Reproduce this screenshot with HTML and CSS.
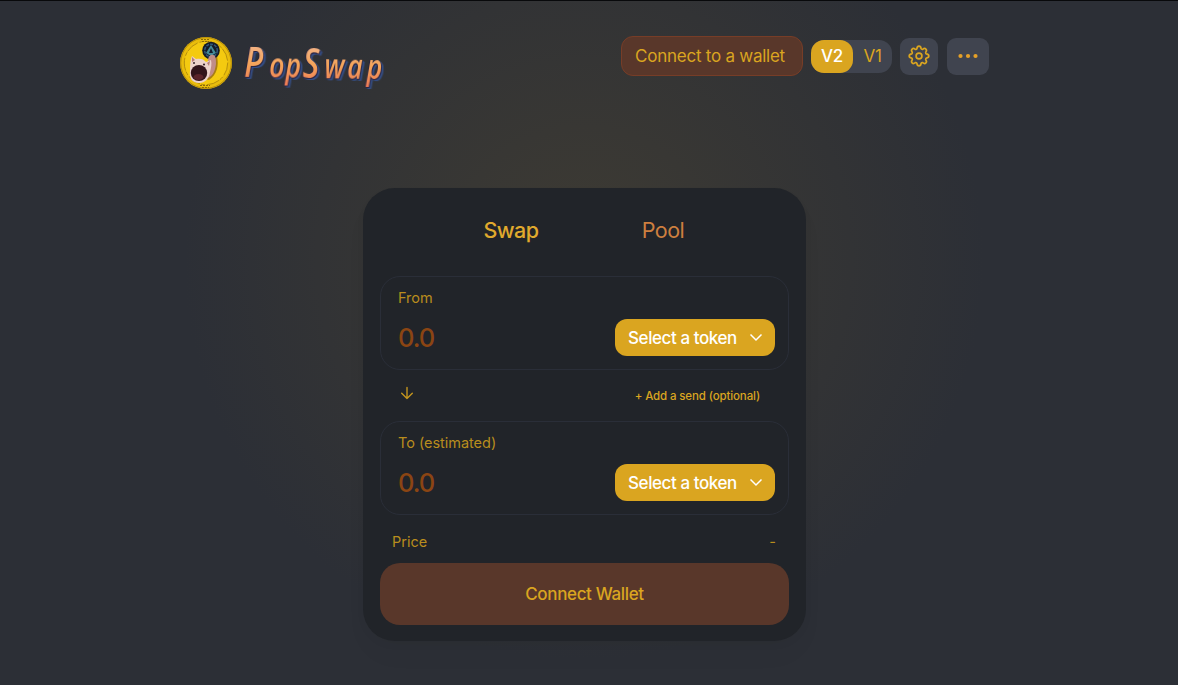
FILE: index.html
```html
<!DOCTYPE html>
<html lang="en">
<head>
<meta charset="utf-8">
<title>PopSwap</title>
<link rel="stylesheet" href="styles.css">
</head>
<body>
<header class="header">
  <a class="brand">
    <svg class="coin" width="54" height="54" viewBox="0 0 54 54">
      <circle cx="27" cy="27" r="26" fill="#e9bd0c"/>
      <circle cx="27" cy="27" r="25.3" fill="none" stroke="#b58c0b" stroke-width="1"/>
      <circle cx="27" cy="27" r="21.700" fill="#f4ca10" stroke="#b08a0c" stroke-width=".9" stroke-dasharray="13 2 4 1"/>
      <path d="M22 3.500h8M23 5.500h7M21 49.500h10M23 51.500h7" stroke="#8a6a0a" stroke-width="1" stroke-dasharray="2 1"/>
      <path d="M38 20c2 10 0 18-8 24l-8-2 14-25z" fill="#9a7014" opacity=".85"/>
      <circle cx="32" cy="14.500" r="8.800" fill="#141b27"/>
      <circle cx="32" cy="14.500" r="6.300" fill="none" stroke="#31577a" stroke-width="1.500" stroke-dasharray="3 1"/>
      <path d="M32 9l-5 8 5 3 5-3z" fill="#438997"/>
      <path d="M32 12l-2 5h4z" fill="#151b2c"/>
      <path d="M29 25c0-5 3-7 5-6 3 0 3 5 3 9-1 8-4 13-9 14z" fill="#c08d88"/>
      <path d="M12 23l1-3 4 3c4-1 8 0 10 3l5-2c1 4 0 8-1 12-1 7-5 11-11 11-7 0-10-5-9-12 0-4 0-8 1-12z" fill="#ecd2cb"/>
      <path d="M13 21l3 3-3 2zM28 27l3-2-1 5z" fill="#b77c76"/>
      <circle cx="15" cy="27" r="1" fill="#38242a"/><circle cx="25" cy="28.500" r="1.100" fill="#38242a"/>
      <ellipse cx="20" cy="37" rx="8.200" ry="8" fill="#32141b"/>
      <ellipse cx="19.500" cy="41" rx="5" ry="3" fill="#5a232a"/>
    </svg>
    <svg class="wordmark" width="164" height="70" viewBox="0 0 164 70">
      <defs>
        <linearGradient id="sunset" x1="0" y1="8" x2="0" y2="50" gradientUnits="userSpaceOnUse">
          <stop offset="0" stop-color="#f3b58b"/><stop offset=".5" stop-color="#f5a45a"/><stop offset="1" stop-color="#ee7a55"/>
        </linearGradient>
      </defs>
      <g transform="rotate(1 75 30)"><text class="letters" transform="scale(.78 1)" x="8 40 61 83 111 140 165" y="42 42 42 42 42 42 42">P<tspan class="small">op</tspan>S<tspan class="small">wap</tspan></text></g>
    </svg>
  </a>
  <nav class="controls">
    <button class="wallet">Connect to a wallet</button>
    <div class="versions"><span class="version active">V2</span><span class="version">V1</span></div>
    <button class="icon-button settings" aria-label="Settings">
      <svg width="24" height="24" viewBox="0 0 24 24" fill="none" stroke="#daa520" stroke-width="1.700" stroke-linejoin="round">
        <circle cx="12" cy="12" r="2.900"/>
        <path d="M9.900 4.700Q10.200 2.200 12 2.200T14.100 4.700Q14.400 5.400 15.700 5.300Q17.600 3.800 18.900 5.100T18.700 8.300Q18.600 9.700 19.300 9.900Q21.800 10.200 21.800 12T19.300 14.100Q18.600 14.400 18.700 15.700Q20.200 17.600 18.900 18.900T15.700 18.700Q14.400 18.600 14.100 19.300Q13.800 21.800 12 21.800T9.900 19.300Q9.600 18.600 8.300 18.700Q6.400 20.200 5.100 18.900T5.300 15.700Q5.400 14.400 4.700 14.100Q2.200 13.800 2.200 12T4.700 9.900Q5.400 9.600 5.300 8.300Q3.800 6.400 5.100 5.100T8.300 5.300Q9.700 5.400 9.900 4.700Z"/>
      </svg>
    </button>
    <button class="icon-button more" aria-label="More">
      <svg width="22" height="6" viewBox="0 0 22 6" fill="#e5a027"><circle cx="3.500" cy="3" r="2.100"/><circle cx="11" cy="3" r="2.100"/><circle cx="18.500" cy="3" r="2.100"/></svg>
    </button>
  </nav>
</header>
<main class="card">
  <div class="tabs"><span class="tab selected">Swap</span><span class="tab">Pool</span></div>
  <section class="panel">
    <div class="label">From</div>
    <div class="amount-row"><span class="amount">0.0</span>
      <button class="token">Select a token<svg width="14" height="9" viewBox="0 0 14 9" fill="none" stroke="#fff" stroke-width="1.500"><path d="M1.500 1.500L7 7l5.500-5.500"/></svg></button>
    </div>
  </section>
  <div class="between">
    <svg width="14" height="14" viewBox="0 0 14 14" fill="none" stroke="#c3951f" stroke-width="1.400" stroke-linecap="round" stroke-linejoin="round"><path d="M7 1.500v11M1.700 7.300L7 12.500l5.300-5.200"/></svg>
    <span class="add-send">+ Add a send (optional)</span>
  </div>
  <section class="panel">
    <div class="label">To (estimated)</div>
    <div class="amount-row"><span class="amount">0.0</span>
      <button class="token">Select a token<svg width="14" height="9" viewBox="0 0 14 9" fill="none" stroke="#fff" stroke-width="1.500"><path d="M1.500 1.500L7 7l5.500-5.500"/></svg></button>
    </div>
  </section>
  <div class="price"><span>Price</span><span>-</span></div>
  <button class="connect">Connect Wallet</button>
</main>
</body>
</html>
```

FILE: styles.css
```css
* { box-sizing: border-box; }
body {
  margin: 0;
  height: 685px;
  overflow: hidden;
  border-top: 1px solid #08090b;
  background: radial-gradient(circle 400px at 584px 260px, #3e3b33 0%, #2c2f36 100%) #2c2f36;
  font-family: Inter, "Liberation Sans", sans-serif;
  color: #daa520;
}
button { border: 0; padding: 0; font: inherit; color: inherit; }
svg { display: block; flex: none; }
.header {
  display: flex;
  justify-content: space-between;
  align-items: flex-start;
  height: 187px;
  padding: 35px 189px 0 179px;
}
.brand { display: flex; gap: 5px; }
.wordmark { overflow: visible; }
.letters {
  font: italic 600 41px "Open Sans", sans-serif;
  fill: url(#sunset);
  filter: drop-shadow(-1px 0 0 #2a2440) drop-shadow(1px 1px 0 #2a2440) drop-shadow(2.500px 1.500px 0 #34508c);
}
.small { font-size: 34px; }
.controls { display: flex; align-items: center; }
.wallet {
  width: 182px;
  height: 40px;
  border: 1px solid #773d27;
  border-radius: 12px;
  background: #59372a;
  font-size: 17px;
  letter-spacing: -.25px;
  padding-right: 4px;
}
.versions {
  display: flex;
  width: 81px;
  height: 33px;
  margin-left: 8px;
  border-radius: 13px;
  background: #40444f;
}
.version { flex: 1; line-height: 33px; text-align: center; font-size: 17px; letter-spacing: -.2px; }
.active { flex: 0 0 42px; border-radius: 13px; background: #daa520; color: #fff; font-weight: 500; }
.icon-button {
  display: flex;
  align-items: center;
  justify-content: center;
  height: 37px;
  border-radius: 9px;
  background: #40444f;
}
.settings { width: 38px; margin-left: 8px; }
.more { width: 42px; margin-left: 9px; }
.card {
  width: 443px;
  height: 453px;
  margin-left: 363px;
  padding: 16px 17px;
  border-radius: 32px;
  background: #212429;
  box-shadow: 0 4px 8px #00000008, 0 16px 24px #00000006;
}
.tabs { display: flex; height: 72px; padding-left: 55px; font-size: 21.500px; line-height: 53px; letter-spacing: -.5px; }
.tab { width: 152px; text-align: center; color: #cd7f3f; }
.selected { color: #e0aa2d; font-weight: 500; }
.panel {
  height: 94px;
  padding: 12px 13px 0 17px;
  border: 1px solid #2a2e38;
  border-radius: 20px;
}
.label { height: 18px; line-height: 18px; font-size: 14.500px; color: #b98d1d; letter-spacing: -.03px; }
.amount-row { display: flex; justify-content: space-between; margin-top: 12px; }
.amount { font-size: 25.500px; line-height: 38px; color: #8b4513; font-weight: 500; letter-spacing: -1px; }
.token {
  display: flex;
  align-items: center;
  justify-content: space-between;
  width: 160px;
  height: 37px;
  padding: 0 12px 0 13px;
  border-radius: 12px;
  background: #daa520;
  color: #fff;
  font-size: 17px;
  font-weight: 500;
  letter-spacing: -.42px;
}
.between {
  display: flex;
  align-items: center;
  justify-content: space-between;
  height: 51px;
  padding: 0 29px 5px 20px;
}
.add-send { font-size: 11.500px; font-weight: 500; letter-spacing: -.13px; padding-top: 5px; }
.price {
  display: flex;
  justify-content: space-between;
  height: 48px;
  padding: 0 13px 0 12px;
  font-size: 14.500px;
  line-height: 53px;
  color: #b98d1d;
}
.connect {
  width: 100%;
  height: 62px;
  border-radius: 20px;
  background: #59372a;
  font-size: 17px;
  font-weight: 500;
  letter-spacing: -.35px;
}
```
